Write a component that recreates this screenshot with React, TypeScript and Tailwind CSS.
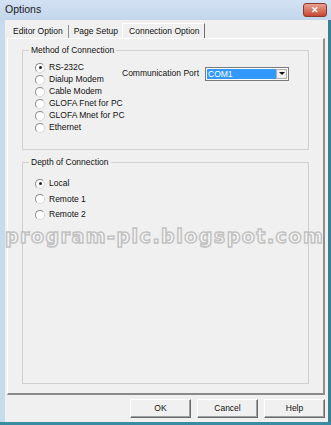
import React from "react";

const Radio = ({ checked }: { checked?: boolean }) => (
  <span className="relative inline-block w-[10px] h-[10px] rounded-full border border-[#8a8a8a] border-r-[#d8d8d8] border-b-[#d8d8d8] bg-white shrink-0">
    {checked && <span className="absolute left-[2.5px] top-[2.5px] w-[3px] h-[3px] rounded-full bg-[#222]" />}
  </span>
);

const RadioRow = ({ label, checked, h = "h-[12px]" }: { label: string; checked?: boolean; h?: string }) => (
  <div className={`flex items-center gap-[4px] whitespace-nowrap ${h}`}>
    <Radio checked={checked} />
    <span>{label}</span>
  </div>
);

export default function App() {
  return (
    <div
      className="relative w-[331px] h-[425px] bg-[#c8daee] flex flex-col overflow-hidden text-[8.5px] text-[#111] whitespace-nowrap"
      style={{ fontFamily: '"Liberation Sans", Arial, sans-serif' }}
    >
      {/* title bar */}
      <div className="h-[20px] flex items-center justify-between pl-[5px] pr-[4px] bg-gradient-to-b from-[#d3e2f3] to-[#c3d6ec]">
        <span className="text-[10.5px] text-[#1a1a1a]">Options</span>
        <div className="w-[24px] h-[14px] rounded-[3px] border border-[#8a3a2e] bg-gradient-to-b from-[#e8a192] to-[#c7452f] flex items-center justify-center text-white text-[9px] font-bold leading-none">
          ✕
        </div>
      </div>
      {/* client */}
      <div className="flex-1 flex ml-[5px]">
        <div className="flex-1 bg-[#f0f0f0] flex flex-col pt-[3px] pl-[2px] pr-[3px]">
          {/* tabs */}
          <div className="flex items-end h-[15px] pl-[5px]">
            <div className="pl-[1px] pr-[5px] h-[13px] flex items-center border-r border-[#909090]">Editor Option</div>
            <div className="pl-[5px] pr-[4px] h-[13px] flex items-center">Page Setup</div>
            <div className="pl-[6px] pr-[5px] h-[15px] flex items-center border-r border-[#707070] border-l border-l-white border-t border-t-white">Connection Option</div>
          </div>
          {/* panel */}
          <div className="h-[357px] border-r-2 border-b-2 border-r-[#909090] border-b-[#8a8a8a] border-l border-l-white border-t border-t-white flex flex-col pl-[14px] pr-[14px] pt-[5px]">
            {/* group 1 */}
            <fieldset className="border border-[#cfcfcf] h-[106px] pl-[12px] pt-[1px]">
              <legend className="px-[2px] ml-[-6px]">Method of Connection</legend>
              <div className="flex mt-[4px]">
                <div className="flex flex-col w-[87px]">
                  <RadioRow label="RS-232C" checked />
                  <RadioRow label="Dialup Modem" />
                  <RadioRow label="Cable Modem" />
                  <RadioRow label="GLOFA Fnet for PC" />
                  <RadioRow label="GLOFA Mnet for PC" />
                  <RadioRow label="Ethernet" />
                </div>
                <div className="flex items-center h-[14px] mt-[5px] gap-[6px]">
                  <span>Communication Port</span>
                  <div className="w-[84px] h-[14px] border border-[#7a7a7a] bg-white flex items-stretch p-[1px]">
                    <div className="flex-1 bg-[#3399ff] text-white leading-[10px] pl-[1px]">COM1</div>
                    <div className="w-[11px] border border-[#b0b0b0] bg-[#f0f0f0] flex items-center justify-center">
                      <svg width="6" height="3" viewBox="0 0 6 3"><path d="M0 0h6L3 3z" fill="#111" /></svg>
                    </div>
                  </div>
                </div>
              </div>
            </fieldset>
            {/* group 2 */}
            <fieldset className="border border-[#cfcfcf] flex-1 mt-[6px] mb-[9px] pl-[12px] pt-[1px]">
              <legend className="px-[2px] ml-[-6px]">Depth of Connection</legend>
              <div className="flex flex-col mt-[8px] gap-[3.5px]">
                <RadioRow label="Local" checked />
                <RadioRow label="Remote 1" />
                <RadioRow label="Remote 2" />
              </div>
            </fieldset>
          </div>
          {/* buttons */}
          <div className="flex justify-end gap-[6px] mt-[4px]">
            {["OK", "Cancel", "Help"].map((b) => (
              <div key={b} className="w-[61px] h-[19px] bg-[#f0f0f0] border border-t-white border-l-white border-r-[#6a6a6a] border-b-[#6a6a6a] shadow-[inset_-1px_-1px_0_#a0a0a0] flex items-center justify-center">
                {b}
              </div>
            ))}
          </div>
        </div>
        <div className="w-[3px] bg-[#3a7f95]" />
      </div>
      <div className="h-[3px] bg-[#3a8aa0]" />
      {/* watermark */}
      <div
        className="absolute left-[5px] top-[227px] text-[19px] font-bold text-[#f8f8f8] tracking-[1.5px] [-webkit-text-stroke:1.5px_#c2c2c2] leading-none"
        style={{ fontFamily: '"DejaVu Sans", sans-serif' }}
      >
        program-plc.blogspot.com
      </div>
    </div>
  );
}
